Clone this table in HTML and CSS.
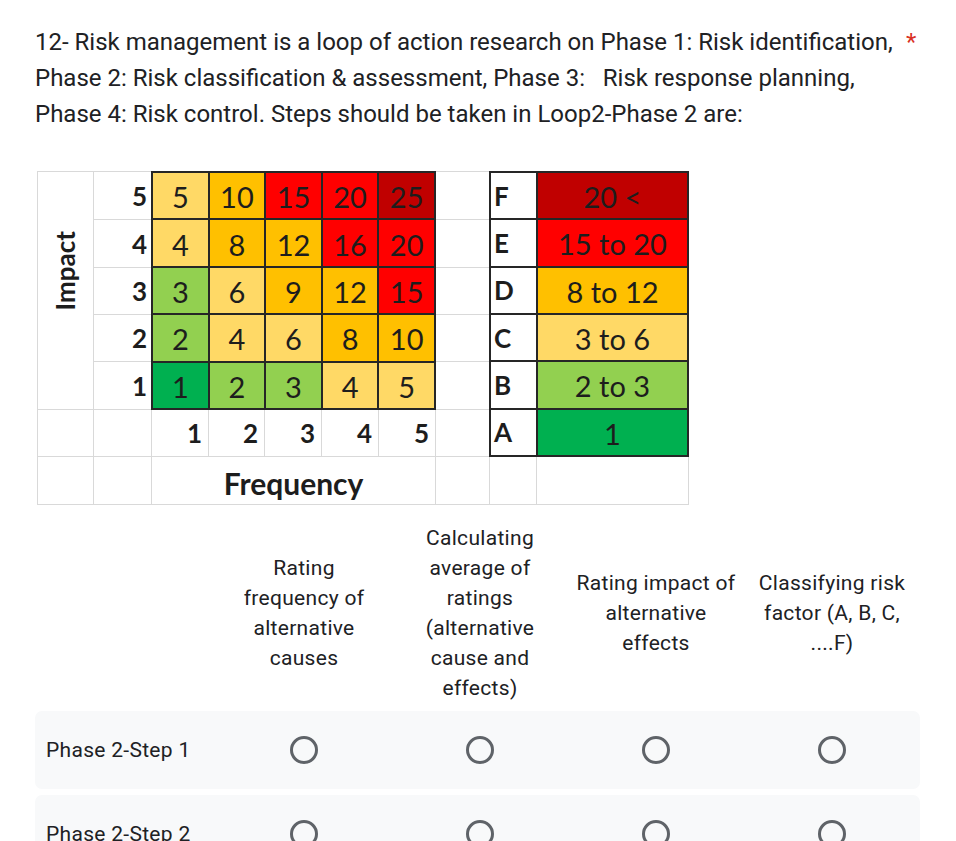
FILE: index.html
```html
<!DOCTYPE html>
<html>
<head>
<meta charset="utf-8">
<link rel="stylesheet" href="styles.css">
</head>
<body>
<div class="form">
  <div class="title-row">
    <div class="title">12- Risk management is a loop of action research on Phase 1: Risk identification,<br>Phase 2: Risk classification &amp; assessment, Phase 3:&nbsp;&nbsp; Risk response planning,<br>Phase 4: Risk control. Steps should be taken in Loop2-Phase 2 are:</div>
    <span class="req">*</span>
  </div>

  <div class="risk">
    <div class="c impact-cell"><span class="impact">Impact</span></div>
    <div class="c rl r1">5</div>
    <div class="c rl r2">4</div>
    <div class="c rl r3">3</div>
    <div class="c rl r4">2</div>
    <div class="c rl r5">1</div>

    <div class="matrix">
      <div class="m y">5</div><div class="m o">10</div><div class="m r">15</div><div class="m r">20</div><div class="m dr">25</div>
      <div class="m y">4</div><div class="m o">8</div><div class="m o">12</div><div class="m r">16</div><div class="m r">20</div>
      <div class="m lg">3</div><div class="m y">6</div><div class="m o">9</div><div class="m o">12</div><div class="m r">15</div>
      <div class="m lg">2</div><div class="m y">4</div><div class="m y">6</div><div class="m o">8</div><div class="m o">10</div>
      <div class="m g">1</div><div class="m lg">2</div><div class="m lg">3</div><div class="m y">4</div><div class="m y">5</div>
    </div>

    <div class="c sp r1"></div>
    <div class="c sp r2"></div>
    <div class="c sp r3"></div>
    <div class="c sp r4"></div>
    <div class="c sp r5"></div>
    <div class="c sp r6"></div>
    <div class="c sp r7"></div>

    <div class="legend">
      <div class="l">F</div><div class="v dr">20 &lt;</div>
      <div class="l">E</div><div class="v r">15 to 20</div>
      <div class="l">D</div><div class="v o">8 to 12</div>
      <div class="l">C</div><div class="v y">3 to 6</div>
      <div class="l">B</div><div class="v lg">2 to 3</div>
      <div class="l">A</div><div class="v g">1</div>
    </div>

    <div class="c c1 r6"></div>
    <div class="c c2 r6"></div>
    <div class="c bn c3 r6">1</div>
    <div class="c bn c4 r6">2</div>
    <div class="c bn c5 r6">3</div>
    <div class="c bn c6 r6">4</div>
    <div class="c bn c7 r6">5</div>

    <div class="c c1 r7"></div>
    <div class="c c2 r7"></div>
    <div class="c freq">Frequency</div>
    <div class="c c9 r7"></div>
    <div class="c c10 r7"></div>
  </div>

  <div class="grid-head">
    <div></div>
    <div class="col-h">Rating<br>frequency of alternative causes</div>
    <div class="col-h">Calculating average of ratings (alternative cause and effects)</div>
    <div class="col-h">Rating impact of alternative effects</div>
    <div class="col-h">Classifying risk factor (A, B, C, ....F)</div>
  </div>

  <div class="grid-row first">
    <div class="row-label">Phase 2-Step 1</div>
    <div class="cell"><span class="radio"></span></div>
    <div class="cell"><span class="radio"></span></div>
    <div class="cell"><span class="radio"></span></div>
    <div class="cell"><span class="radio"></span></div>
  </div>
  <div class="grid-row">
    <div class="row-label">Phase 2-Step 2</div>
    <div class="cell"><span class="radio"></span></div>
    <div class="cell"><span class="radio"></span></div>
    <div class="cell"><span class="radio"></span></div>
    <div class="cell"><span class="radio"></span></div>
  </div>
</div>
</body>
</html>
```

FILE: styles.css
```css
html, body {
  margin: 0;
  padding: 0;
  background: #ffffff;
}

body {
  font-family: Roboto, "Noto Sans", Arial, sans-serif;
  color: #202124;
}

.form {
  width: 885px;
  padding: 24px 0 0 35px;
}

.title-row {
  display: flex;
  align-items: flex-start;
}

.title {
  flex: 1;
  font-size: 24px;
  line-height: 36px;
  letter-spacing: 0;
  color: #202124;
}

.req {
  color: #d93025;
  font-size: 24px;
  line-height: 36px;
  padding-left: 6px;
  width: 14px;
}

/* ---------- Risk matrix picture ---------- */
.risk {
  display: grid;
  grid-template-columns: 55px 57px 56px 55px 56px 56px 56px 53px 46px 151px;
  grid-template-rows: 47px 47px 46px 46px 47px 46px 47px;
  gap: 1px;
  padding: 1px;
  background: #d9d9d9;
  width: max-content;
  margin: 39px 0 0 2px;
  font-family: Lato, "Open Sans", sans-serif;
  color: #1d1d1d;
}

.c {
  background: #ffffff;
  display: flex;
  align-items: center;
}

.r1 { grid-row: 1; }
.r2 { grid-row: 2; }
.r3 { grid-row: 3; }
.r4 { grid-row: 4; }
.r5 { grid-row: 5; }
.r6 { grid-row: 6; }
.r7 { grid-row: 7; }

.c1 { grid-column: 1; }
.c2 { grid-column: 2; }
.c3 { grid-column: 3; }
.c4 { grid-column: 4; }
.c5 { grid-column: 5; }
.c6 { grid-column: 6; }
.c7 { grid-column: 7; }
.c9 { grid-column: 9; }
.c10 { grid-column: 10; }

.impact-cell {
  grid-column: 1;
  grid-row: 1 / span 5;
  justify-content: center;
  padding-bottom: 40px;
}

.impact {
  writing-mode: vertical-rl;
  transform: rotate(180deg);
  font-weight: 700;
  font-size: 26px;
  line-height: 1;
  padding-left: 2px;
}

.rl {
  grid-column: 2;
  justify-content: flex-end;
  padding-right: 4px;
  font-weight: 700;
  font-size: 26px;
}

.sp {
  grid-column: 8;
}

.bn {
  justify-content: flex-end;
  padding-right: 6px;
  font-weight: 700;
  font-size: 26px;
}

.freq {
  grid-column: 3 / span 5;
  grid-row: 7;
  justify-content: center;
  font-weight: 700;
  font-size: 30px;
  padding-top: 4px;
}

.matrix {
  grid-column: 3 / span 5;
  grid-row: 1 / span 5;
  margin: -1px;
  display: grid;
  grid-template-columns: repeat(5, 1fr);
  grid-template-rows: repeat(5, 1fr);
  gap: 2px;
  border: 2px solid #262626;
  background: #262626;
}

.m, .v {
  display: flex;
  align-items: center;
  justify-content: center;
  font-size: 29px;
  padding-top: 2px;
}

.legend {
  grid-column: 9 / span 2;
  grid-row: 1 / span 6;
  margin: -1px;
  display: grid;
  grid-template-columns: 45px 1fr;
  grid-template-rows: repeat(6, 1fr);
  gap: 2px;
  border: 2px solid #262626;
  background: #262626;
}

.l {
  background: #ffffff;
  display: flex;
  align-items: center;
  padding-left: 3px;
  font-weight: 700;
  font-size: 26px;
}

.dr { background: #c00000; }
.r  { background: #ff0000; }
.o  { background: #ffc000; }
.y  { background: #ffd966; }
.lg { background: #92d050; }
.g  { background: #00b050; }

/* ---------- Grid question ---------- */
.grid-head,
.grid-row {
  display: grid;
  grid-template-columns: 181px repeat(4, 176px);
  width: 885px;
}

.grid-head {
  margin-top: 18px;
  align-items: center;
}

.col-h {
  text-align: center;
  font-size: 21px;
  line-height: 30px;
  letter-spacing: 0.3px;
  padding: 0 8px;
  color: #202124;
}

.grid-row {
  background: #f8f9fa;
  border-radius: 7px;
  height: 78px;
  align-items: center;
  margin-top: 6px;
}

.grid-row.first {
  margin-top: 8px;
}

.row-label {
  padding-left: 11px;
  font-size: 21px;
  line-height: 30px;
  letter-spacing: 0.3px;
  color: #202124;
}

.cell {
  display: flex;
  justify-content: center;
  align-items: center;
}

.radio {
  display: block;
  width: 28px;
  height: 28px;
  box-sizing: border-box;
  border: 3px solid #5f6368;
  border-radius: 50%;
}
```
